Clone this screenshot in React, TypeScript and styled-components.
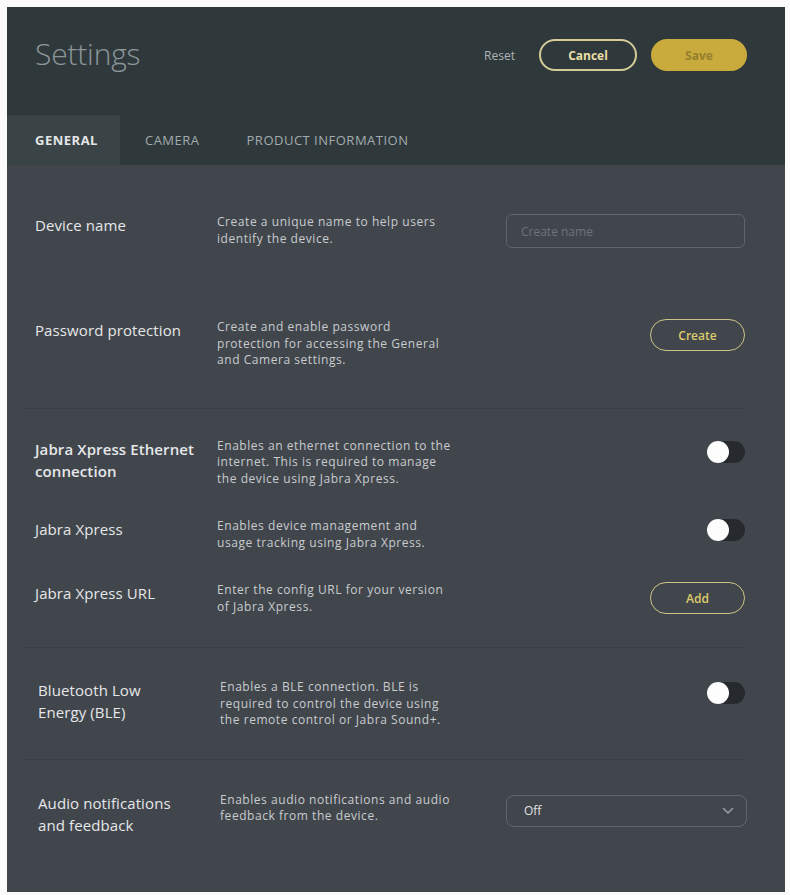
import styled, { createGlobalStyle } from "styled-components"

const GlobalStyle = createGlobalStyle`
    body {
        margin: 0;
        background: #fbfbfb;
        font-family: "Open Sans", "Noto Sans", sans-serif;
    }
`

const Frame = styled.div`
    margin: 7px 5px 3px 7px;
    width: 778px;
    height: 885px;
    background: #41464d;
    display: flex;
    flex-direction: column;
    overflow: hidden;
`

const Header = styled.header`
    background: #2f393c;
    display: flex;
    flex-direction: column;
`

const TopBar = styled.div`
    height: 108px;
    display: flex;
    align-items: flex-start;
    justify-content: space-between;
    padding: 26px 38px 0 28px;
    box-sizing: border-box;
`

const Title = styled.h1`
    margin: 0;
    font-size: 30px;
    font-weight: 300;
    color: #8d9699;
    letter-spacing: -0.2px;
`

const Actions = styled.div`
    display: flex;
    align-items: center;
    gap: 14px;
    margin-top: 6px;
`

const ResetLink = styled.span`
    font-size: 12px;
    color: #aeb4b7;
    margin-right: 10px;
`

const PillButton = styled.button<{ $filled?: boolean; $width: number }>`
    width: ${p => p.$width}px;
    height: 32px;
    border-radius: 16px;
    border: 2px solid ${p => (p.$filled ? "#c9aa3c" : "#d6cc98")};
    background: ${p => (p.$filled ? "#c9aa3c" : "transparent")};
    color: ${p => (p.$filled ? "#93802f" : "#e9dfa6")};
    font-family: inherit;
    font-size: 12px;
    font-weight: 700;
    padding: 0;
`

const TabBar = styled.nav`
    display: flex;
    height: 50px;
`

const Tab = styled.div<{ $active?: boolean }>`
    display: flex;
    align-items: center;
    padding: 0 22px 0 25px;
    &:first-child {
        padding-left: 28px;
    }
    background: ${p => (p.$active ? "#3a4346" : "transparent")};
    color: ${p => (p.$active ? "#e4e6e6" : "#a3aaad")};
    font-size: 13px;
    font-weight: ${p => (p.$active ? 700 : 400)};
    letter-spacing: 0.5px;
`

const Section = styled.section<{ $top: number; $bottom: number; $gap: number; $inset?: number }>`
    display: flex;
    flex-direction: column;
    gap: ${p => p.$gap}px;
    padding: ${p => p.$top}px 40px ${p => p.$bottom}px ${p => 28 + (p.$inset ?? 0)}px;
`

const Divider = styled.hr`
    border: none;
    height: 1px;
    background: #393e44;
    margin: 0 40px 0 18px;
`

const Row = styled.div`
    display: grid;
    grid-template-columns: 182px 270px 1fr;
    align-items: start;
`

const Label = styled.div<{ $strong?: boolean }>`
    font-size: 15px;
    line-height: 22px;
    color: #e6e7e8;
    font-weight: ${p => (p.$strong ? 600 : 400)};
    letter-spacing: 0.1px;
    padding-right: 6px;
`

const Description = styled.p`
    margin: 0;
    font-size: 12px;
    line-height: 16.5px;
    letter-spacing: 0.55px;
    color: #c9ccce;
    white-space: nowrap;
`

const Control = styled.div<{ $offset?: number }>`
    display: flex;
    justify-content: flex-end;
    margin-top: ${p => p.$offset ?? 0}px;
`

const TextInput = styled.input`
    width: 239px;
    height: 34px;
    box-sizing: border-box;
    border: 1.5px solid #5f656c;
    border-radius: 6px;
    background: transparent;
    padding: 0 14px;
    font-family: inherit;
    font-size: 12px;
    color: #e6e7e8;
    &::placeholder {
        color: #6d7379;
    }
`

const OutlineButton = styled.button`
    width: 95px;
    height: 32px;
    border-radius: 16px;
    border: 1.5px solid #cdc386;
    background: transparent;
    color: #dccb6a;
    font-family: inherit;
    font-size: 12px;
    font-weight: 600;
    padding: 0;
`

const Toggle = styled.div`
    width: 38px;
    height: 22px;
    border-radius: 11px;
    background: #262a2e;
    position: relative;
`

const Knob = styled.span`
    position: absolute;
    left: 0;
    top: 0;
    width: 22px;
    height: 22px;
    border-radius: 50%;
    background: #fdfdfd;
`

const Select = styled.div`
    width: 241px;
    height: 32px;
    margin-right: -2px;
    box-sizing: border-box;
    border: 1.5px solid #5f656c;
    border-radius: 8px;
    display: flex;
    align-items: center;
    justify-content: space-between;
    padding: 0 12px 0 17px;
    font-size: 12px;
    color: #e0e2e3;
`

function Switch() {
    return (
        <Toggle>
            <Knob />
        </Toggle>
    )
}

function Chevron() {
    return (
        <svg width="12" height="8" viewBox="0 0 12 8" fill="none">
            <path d="M1.5 1.5 6 6l4.5-4.5" stroke="#9aa0a6" strokeWidth="1.5" strokeLinecap="round" strokeLinejoin="round" />
        </svg>
    )
}

export default function App() {
    return (
        <>
            <GlobalStyle />
            <Frame>
                <Header>
                    <TopBar>
                        <Title>Settings</Title>
                        <Actions>
                            <ResetLink>Reset</ResetLink>
                            <PillButton $width={98}>Cancel</PillButton>
                            <PillButton $width={96} $filled>Save</PillButton>
                        </Actions>
                    </TopBar>
                    <TabBar>
                        <Tab $active>GENERAL</Tab>
                        <Tab>CAMERA</Tab>
                        <Tab>PRODUCT INFORMATION</Tab>
                    </TabBar>
                </Header>

                <Section $top={49} $bottom={39} $gap={71}>
                    <Row>
                        <Label>Device name</Label>
                        <Description>Create a unique name to help users<br />identify the device.</Description>
                        <Control>
                            <TextInput placeholder="Create name" />
                        </Control>
                    </Row>
                    <Row>
                        <Label>Password protection</Label>
                        <Description>Create and enable password<br />protection for accessing the General<br />and Camera settings.</Description>
                        <Control>
                            <OutlineButton>Create</OutlineButton>
                        </Control>
                    </Row>
                </Section>
                <Divider />
                <Section $top={29} $bottom={32} $gap={31}>
                    <Row>
                        <Label $strong>Jabra Xpress Ethernet connection</Label>
                        <Description>Enables an ethernet connection to the<br />internet. This is required to manage<br />the device using Jabra Xpress.</Description>
                        <Control $offset={3}>
                            <Switch />
                        </Control>
                    </Row>
                    <Row>
                        <Label>Jabra Xpress</Label>
                        <Description>Enables device management and<br />usage tracking using Jabra Xpress.</Description>
                        <Control $offset={1}>
                            <Switch />
                        </Control>
                    </Row>
                    <Row>
                        <Label>Jabra Xpress URL</Label>
                        <Description>Enter the config URL for your version<br />of Jabra Xpress.</Description>
                        <Control>
                            <OutlineButton>Add</OutlineButton>
                        </Control>
                    </Row>
                </Section>
                <Divider />
                <Section $top={31} $bottom={30} $gap={0} $inset={3}>
                    <Row>
                        <Label>Bluetooth Low<br />Energy (BLE)</Label>
                        <Description>Enables a BLE connection. BLE is<br />required to control the device using<br />the remote control or Jabra Sound+.</Description>
                        <Control $offset={3}>
                            <Switch />
                        </Control>
                    </Row>
                </Section>
                <Divider />
                <Section $top={32} $bottom={0} $gap={0} $inset={3}>
                    <Row>
                        <Label>Audio notifications<br />and feedback</Label>
                        <Description>Enables audio notifications and audio<br />feedback from the device.</Description>
                        <Control $offset={3}>
                            <Select>
                                Off
                                <Chevron />
                            </Select>
                        </Control>
                    </Row>
                </Section>
            </Frame>
        </>
    )
}
